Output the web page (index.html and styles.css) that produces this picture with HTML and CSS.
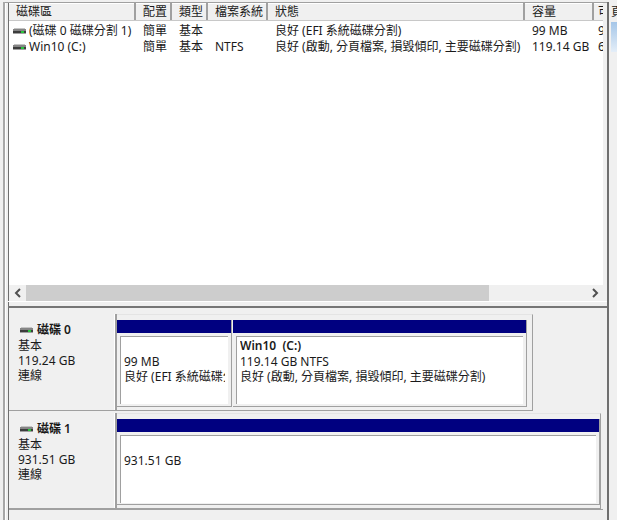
FILE: index.html
```html
<!DOCTYPE html>
<html lang="zh-Hant">
<head>
<meta charset="utf-8">
<title>磁碟管理</title>
<link rel="stylesheet" href="styles.css">
</head>
<body>
<svg class="defs" width="0" height="0">
  <symbol id="drive" viewBox="0 0 13 6">
    <rect x="1" y="0" width="11" height="1" fill="#c4c4c4"/>
    <rect x="0" y="1" width="13" height="2" fill="#858585"/>
    <rect x="0" y="3" width="13" height="2" fill="#3c3c3c"/>
    <rect x="0" y="5" width="13" height="1" fill="#a0a0a0"/>
    <rect x="8" y="3" width="3" height="2" fill="#27c43c"/>
  </symbol>
</svg>
<div class="outer">
  <main class="panel">
    <div class="list">
      <div class="thead">
        <div class="th first">磁碟區</div>
        <div class="th">配置</div>
        <div class="th">類型</div>
        <div class="th">檔案系統</div>
        <div class="th">狀態</div>
        <div class="th">容量</div>
        <div class="th last">可</div>
      </div>
      <div class="rows">
        <div class="tr">
          <div class="td name"><svg class="ico"><use href="#drive"/></svg>(磁碟 0 磁碟分割 1)</div>
          <div class="td">簡單</div>
          <div class="td">基本</div>
          <div class="td"></div>
          <div class="td">良好 (EFI 系統磁碟分割)</div>
          <div class="td">99 MB</div>
          <div class="td">9</div>
        </div>
        <div class="tr">
          <div class="td name"><svg class="ico"><use href="#drive"/></svg>Win10 (C:)</div>
          <div class="td">簡單</div>
          <div class="td">基本</div>
          <div class="td">NTFS</div>
          <div class="td">良好 (啟動, 分頁檔案, 損毀傾印, 主要磁碟分割)</div>
          <div class="td">119.14 GB</div>
          <div class="td">6</div>
        </div>
      </div>
      <div class="hscroll">
        <div class="arrow"><svg width="8" height="10" viewBox="0 0 8 10"><path d="M6 1 2 5l4 4" fill="none" stroke="#505050" stroke-width="2"/></svg></div>
        <div class="track"><div class="thumb"></div></div>
        <div class="arrow"><svg width="8" height="10" viewBox="0 0 8 10"><path d="M2 1l4 4-4 4" fill="none" stroke="#505050" stroke-width="2"/></svg></div>
      </div>
    </div>
    <div class="splitter"></div>
    <div class="disks">
      <section class="disk disk0">
        <div class="label">
          <div class="title"><svg class="ico big"><use href="#drive"/></svg><b>磁碟 0</b></div>
          <div>基本</div>
          <div>119.24 GB</div>
          <div>連線</div>
        </div>
        <div class="frame">
          <div class="part p-efi">
            <div class="bar"></div>
            <div class="box">
              <div>&nbsp;</div>
              <div>99 MB</div>
              <div>良好 (EFI 系統磁碟分割)</div>
            </div>
          </div>
          <div class="part p-win">
            <div class="bar"></div>
            <div class="box">
              <div class="vol">Win10&nbsp; (C:)</div>
              <div>119.14 GB NTFS</div>
              <div>良好 (啟動, 分頁檔案, 損毀傾印, 主要磁碟分割)</div>
            </div>
          </div>
        </div>
      </section>
      <section class="disk disk1">
        <div class="label">
          <div class="title"><svg class="ico big"><use href="#drive"/></svg><b>磁碟 1</b></div>
          <div>基本</div>
          <div>931.51 GB</div>
          <div>連線</div>
        </div>
        <div class="frame">
          <div class="part p-data">
            <div class="bar"></div>
            <div class="box">
              <div>&nbsp;</div>
              <div>931.51 GB</div>
            </div>
          </div>
        </div>
      </section>
    </div>
  </main>
  <aside class="side">
    <div class="side-top">頁</div>
    <div class="side-blue"></div>
  </aside>
</div>
</body>
</html>
```

FILE: styles.css
```css
* { box-sizing: border-box; }
html, body { margin: 0; height: 100%; }
body {
  background: #f0f0f0;
  color: #1a1a1a;
  font: 12px/16px "Noto Sans", "Noto Sans CJK TC", sans-serif;
  overflow: hidden;
}
.defs { display: block; height: 0; }
.outer {
  display: flex;
  width: 617px;
  height: 520px;
  padding: 2px 0 0 3px;
}
.panel {
  width: 606px;
  height: 518px;
  flex: none;
  display: flex;
  flex-direction: column;
  border-left: 2px solid #a8a8a8;
  border-right: 2px solid #6f6f6f;
  padding-left: 3px;
  box-shadow: inset 1px 0 0 #fff;
  background: #f0f0f0;
}
.panel::before {
  content: "";
  display: block;
  flex: none;
  height: 1px;
  margin-left: -3px;
  background: #a0a0a0;
}
.list {
  flex: none;
  height: 298px;
  width: 599px;
  display: flex;
  flex-direction: column;
  background: #fff;
  border-left: 1px solid #6f6f6f;
  border-right: 4px solid #f0f0f0;
}
.thead, .tr {
  display: grid;
  grid-template-columns: 127px 36px 36px 60px 257px 69px 1fr;
  white-space: nowrap;
  overflow: hidden;
}
.thead {
  height: 18px;
  flex: none;
  background: #f0f0f0;
  border-bottom: 1px solid #c8c8c8;
  box-shadow: inset 0 1px 0 #fff;
}
.th {
  padding-left: 7px;
  border-right: 2px solid #a0a0a0;
  line-height: 17px;
  overflow: hidden;
}
.th.last { border-right: 0; padding-left: 4px; }
.rows { flex: 1; padding-top: 2px; }
.tr { height: 16px; }
.td { padding-left: 7px; overflow: hidden; }
.td:last-child { padding-left: 4px; }
.td.name { display: flex; align-items: center; padding-left: 4px; }
.ico { width: 13px; height: 6px; flex: none; margin-right: 3px; }
.hscroll {
  flex: none;
  height: 16px;
  display: flex;
  background: #f0f0f0;
}
.arrow {
  width: 17px;
  flex: none;
  display: flex;
  align-items: center;
  justify-content: center;
}
.track { flex: 1; }
.thumb { width: 463px; height: 100%; background: #cdcdcd; }
.splitter {
  flex: none;
  height: 7px;
  width: 599px;
  background: #f0f0f0;
  border-bottom: 2px solid #767676;
  box-shadow: inset 0 1px 0 #fff, inset 1px 0 0 #6f6f6f;
}
.disks {
  flex: 1;
  min-height: 0;
  display: flex;
  flex-direction: column;
  gap: 2px;
  padding-top: 6px;
  width: 598px;
  background: #f0f0f0;
  border-left: 1px solid #6f6f6f;
}
.disk { display: flex; flex: none; }
.disk0 { height: 97px; }
.disk1 { height: 97px; width: 594px; border-bottom: 1px solid #a0a0a0; }
.label {
  width: 108px;
  flex: none;
  padding: 8px 0 0 9px;
  line-height: 15px;
  border-right: 2px solid #a0a0a0;
  border-bottom: 1px solid #a0a0a0;
  box-shadow: inset -1px 0 0 #fff;
}
.title { display: flex; align-items: center; margin-bottom: 1px; }
.ico.big { margin: 0 4px 0 2px; }
.title b { font-weight: 600; }
.frame {
  display: flex;
  padding: 5px 0 3px;
  border-top: 1px solid #e4e4e4;
  border-bottom: 1px solid #a0a0a0;
  border-right: 1px solid #a0a0a0;
}
.disk0 .frame { width: 416px; }
.disk1 .frame { width: 484px; }
.part {
  display: flex;
  flex-direction: column;
  flex: none;
  border-right: 1px solid #a0a0a0;
  border-bottom: 1px solid #a0a0a0;
}
.p-efi { width: 115px; }
.p-win { width: 294px; margin-left: 1px; }
.p-data { width: 483px; }
.bar {
  height: 13px;
  flex: none;
  background: #000080;
}
.box {
  margin: 3px;
  height: 68px;
  flex: none;
  background: #fff;
  border-top: 1px solid #a0a0a0;
  border-left: 1px solid #a0a0a0;
  padding: 1px 3px 0;
  white-space: nowrap;
  overflow: hidden;
  line-height: 15.5px;
}
.box > div { overflow: hidden; }
.vol { font-weight: 600; }
.side {
  flex: 1;
  min-width: 0;
  padding-left: 2px;
  overflow: hidden;
}
.side-top { height: 20px; overflow: hidden; white-space: nowrap; line-height: 20px; }
.side-blue {
  height: 30px;
  background: linear-gradient(#a5c6e8, #e4eef8);
}
```
